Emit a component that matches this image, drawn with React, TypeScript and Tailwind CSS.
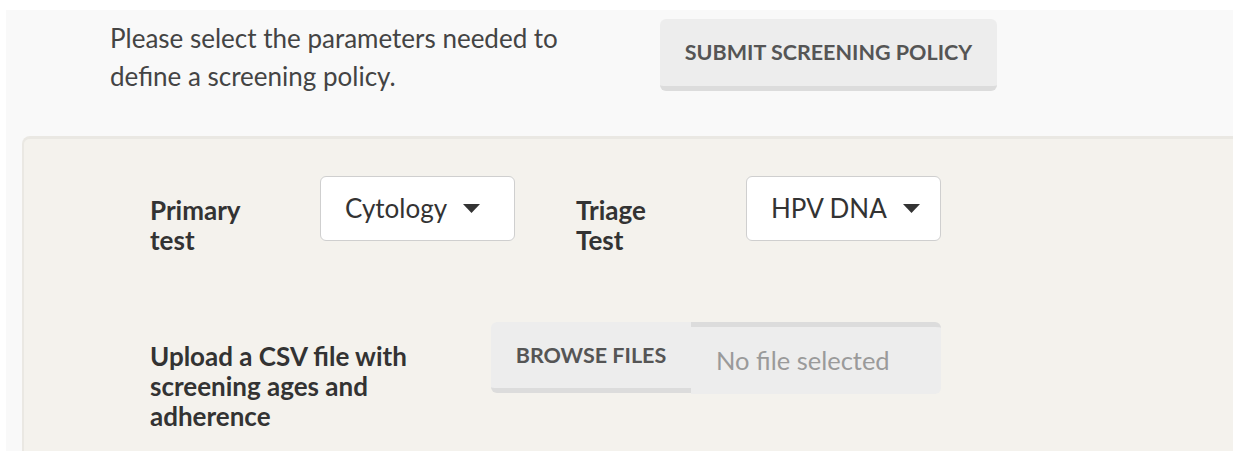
import { useState } from 'react'

const font = { fontFamily: 'Lato, "Noto Sans", sans-serif' }

function Caret() {
  return (
    <svg width="17" height="9" viewBox="0 0 17 9" className="shrink-0">
      <path d="M0 0 L17 0 L8.5 9 Z" fill="#333" />
    </svg>
  )
}

function Picker({ value }: { value: string }) {
  return (
    <button className="flex h-[65px] w-[195px] shrink-0 items-center gap-[16px] rounded-md border border-[#cfcfcf] bg-white pl-[24px] text-[26px] text-[#333]">
      <span>{value}</span>
      <Caret />
    </button>
  )
}

export default function App() {
  const [primary] = useState('Cytology')
  const [triage] = useState('HPV DNA')

  return (
    <div className="h-[451px] w-full overflow-hidden bg-white pl-[6px] pt-[10px]" style={font}>
      <div className="h-full bg-[#f9f9f9]">
        {/* Intro + submit */}
        <div className="flex h-[81px] items-start pl-[104px] pt-[9px]">
          <p className="w-[550px] text-[26px] leading-[38px] text-[#444]">
            Please select the parameters needed to
            <br />
            define a screening policy.
          </p>
          <button className="flex h-[72px] w-[337px] items-center justify-center rounded-md border-b-[5px] border-[#dcdcdc] bg-[#ededed] text-[21.5px] font-bold text-[#555]">
            SUBMIT SCREENING POLICY
          </button>
        </div>

        {/* Policy form */}
        <div className="ml-[16px] mt-[45px] h-full rounded-tl-lg border-l-2 border-t-[3px] border-[#eae8e3] bg-[#f4f2ed] pl-[126px] pt-[37px]">
          <div className="flex h-[65px] items-start">
            <div className="w-[170px] pt-[19px] text-[26px] font-bold leading-[30px] text-[#333]">
              Primary
              <br />
              test
            </div>
            <Picker value={primary} />
            <div className="ml-[61px] w-[170px] pt-[19px] text-[26px] font-bold leading-[30px] text-[#333]">
              Triage
              <br />
              Test
            </div>
            <Picker value={triage} />
          </div>

          <div className="mt-[81px] flex items-start">
            <div className="w-[341px] pt-[19px] text-[26px] font-bold leading-[30px] text-[#333]">
              Upload a CSV file with
              <br />
              screening ages and
              <br />
              adherence
            </div>
            <button className="flex h-[71px] w-[200px] items-center justify-center rounded-l-md border-b-[5px] border-[#dcdcdc] bg-[#ededed] text-[21.5px] font-bold text-[#555]">
              BROWSE FILES
            </button>
            <div className="flex h-[72px] w-[250px] items-center rounded-r-md border-t-[5px] border-[#dcdcdc] bg-[#ededed] pl-[25px] text-[25.5px] text-[#9a9a9a]">
              No file selected
            </div>
          </div>
        </div>
      </div>
    </div>
  )
}
